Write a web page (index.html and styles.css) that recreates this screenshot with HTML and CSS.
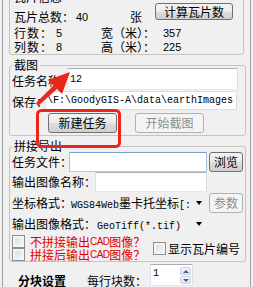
FILE: index.html
```html
<!DOCTYPE html>
<html lang="zh-CN">
<head>
  <meta charset="UTF-8">
  <title>瓦片下载</title>
  <meta name="viewport" content="width=device-width, initial-scale=1">
  <link rel="stylesheet" href="styles.css">
</head>
<body>

  <div class="panel">

    <!-- 瓦片信息 -->
    <fieldset class="group group-info">
      <legend>瓦片信息</legend>
      <div class="stat">
        <span class="lbl w62">瓦片总数：</span>
        <span class="num w54">40</span>
        <span class="lbl w25">张</span>
        <button class="btn btn-calc">计算瓦片数</button>
      </div>
      <div class="stat stat-gap">
        <span class="lbl w42 spaced">行数：</span>
        <span class="num w45">5</span>
        <span class="lbl w62">宽（米）：</span>
        <span class="num">357</span>
      </div>
      <div class="stat">
        <span class="lbl w42 spaced">列数：</span>
        <span class="num w45">8</span>
        <span class="lbl w62">高（米）：</span>
        <span class="num">225</span>
      </div>
    </fieldset>

    <!-- 截图 -->
    <fieldset class="group group-shot">
      <legend>截图</legend>
      <div class="field field-task">
        <label class="lbl lbl-task" for="taskName">任务名称：</label>
        <input id="taskName" class="text text-task" type="text" value="12">
      </div>
      <div class="field field-save">
        <span class="lbl lbl-save">保存：</span>
        <div class="path">\F:\GoodyGIS-A\data\earthImages</div>
      </div>
      <div class="actions">
        <button class="btn btn-wide">新建任务</button>
        <button class="btn btn-wide" disabled>开始截图</button>
      </div>
    </fieldset>

    <!-- 拼接导出 -->
    <fieldset class="group group-join">
      <legend>拼接导出</legend>
      <div class="field field-first">
        <span class="lbl lbl-short">任务文件：</span>
        <input class="text text-short is-hover" type="text">
        <button class="btn btn-side">浏览</button>
      </div>
      <div class="field">
        <span class="lbl lbl-long">输出图像名称：</span>
        <input class="text text-long" type="text">
      </div>
      <div class="field field-gap">
        <span class="lbl lbl-short">坐标格式：</span>
        <div class="combo text-short">
          <span class="combo-val"><span class="mono">WGS84Web</span>墨卡托坐标<span class="mono">[:</span></span>
          <i class="caret"></i>
        </div>
        <button class="btn btn-side" disabled>参数</button>
      </div>
      <div class="field field-gap">
        <span class="lbl lbl-long">输出图像格式：</span>
        <div class="combo text-long">
          <span class="combo-val"><span class="mono">GeoTiff(*.tif)</span></span>
          <i class="caret"></i>
        </div>
      </div>
      <div class="checks">
        <div class="checks-left">
          <label class="check warn"><span class="box"></span>不拼接输出<span class="cad">CAD</span>图像？</label>
          <label class="check warn"><span class="box"></span>拼接后输出<span class="cad">CAD</span>图像？</label>
        </div>
        <label class="check check-num"><span class="box"></span>显示瓦片编号</label>
      </div>
    </fieldset>

    <div class="tile-row">
      <span class="tile-title">分块设置</span>
      <span class="lbl lbl-tile">每行块数：</span>
      <div class="spin">
        <span class="spin-val">1</span>
        <span class="spin-btns">
          <span class="spin-btn"><i class="tri-up"></i></span>
          <span class="spin-btn"><i class="tri-down"></i></span>
        </span>
      </div>
    </div>

  </div>

  <!-- 标注 -->
  <svg class="marks" width="253" height="287" viewBox="0 0 253 287">
    <polygon points="36,103 38,106 57,89 54,85" fill="#e8261c"/>
    <polygon points="70,72 48,80 62,94" fill="#e8261c"/>
    <rect x="37.5" y="110.5" width="82" height="36" rx="4" fill="none" stroke="#e8261c" stroke-width="3"/>
  </svg>

</body>
</html>
```

FILE: styles.css
```css
/* reset ringan */
* { box-sizing: border-box; margin: 0; padding: 0; }

body {
  background: #f0f0f0;
  font: 12px/14px "Noto Sans CJK SC", "Noto Sans", sans-serif;
  color: #000;
  overflow: hidden;
}

.panel {
  margin: -10px 0 0 2px;
  width: 249px;
  height: 310px;
  border-left: 1px solid #a0a0a0;
  border-right: 1px solid #a0a0a0;
  padding-left: 6px;
}

/* group box */
.group {
  border: 1px solid #c4c4c4;
  border-radius: 3px;
  padding: 0 2px;
  min-width: 0;
}
.group legend {
  padding: 0 2px;
  line-height: 14px;
}
.group-info { width: 235px; padding-top: 6px; }
.group-shot { width: 237px; margin-top: 3px; padding-bottom: 2px; }
.group-join { width: 237px; margin-top: 3px; }

.lbl { white-space: nowrap; flex-shrink: 0; }
.spaced { letter-spacing: 1px; }
.num { font: 11px/14px "Liberation Sans", Arial, sans-serif; flex-shrink: 0; }
.mono { font: 10px "Liberation Mono", monospace; }

.w25 { width: 25px; }
.w42 { width: 42px; }
.w45 { width: 45px; }
.w54 { width: 54px; }
.w62 { width: 62px; }

.stat {
  display: flex;
  align-items: center;
  height: 14px;
  margin-left: 2px;
}
.stat-gap { margin-top: 2px; }

/* buttons */
.btn {
  font: inherit;
  color: #000;
  border: 1px solid #707070;
  border-radius: 3px;
  background: linear-gradient(#f2f2f2 0%, #ebebeb 50%, #dddddd 51%, #cfcfcf 100%);
  flex-shrink: 0;
}
.btn:disabled {
  color: #8d8d8d;
  border-color: #adb2b5;
  background: #f4f4f4;
}
.btn-calc {
  width: 78px;
  height: 17px;
  align-self: flex-start;
  margin-top: -7px;
}
.btn-wide { width: 69px; height: 20px; }
.btn-side { width: 34px; height: 20px; margin-left: 2px; }

/* rows with inputs */
.field {
  display: flex;
  align-items: center;
  height: 20px;
}
.field-task { height: 22px; margin-top: -4px; }
.field-save { height: 19px; margin-top: 1px; }
.field-first { margin-top: -1px; }
.field-gap { margin-top: 1px; }

.lbl-task { width: 55px; padding-top: 3px; }
.lbl-save { width: 33px; padding-top: 3px; }
.lbl-short { width: 57px; }
.lbl-long { width: 83px; }

.text {
  height: 100%;
  background: #fff;
  border: 1px solid;
  border-color: #abadb3 #dbdfe6 #e3e9ef #e2e3ea;
  padding: 0 2px;
  font: 10px "Liberation Mono", monospace;
  color: #000;
  outline: none;
}
.text-task { width: 171px; }
.text-short { width: 138px; }
.text-long { width: 112px; }
.text.is-hover { border-color: #7da2ce #a4c3e4 #b5cfe7 #a4c3e4; }

.path {
  width: 192px;
  height: 19px;
  background: #fff;
  border: 1px solid #d9dce0;
  padding-left: 1px;
  font: 10px/17px "Liberation Mono", monospace;
  white-space: nowrap;
  overflow: hidden;
}

.actions {
  display: flex;
  gap: 18px;
  margin-top: 3px;
  padding-left: 36px;
}

/* combo box */
.combo {
  display: flex;
  align-items: center;
  justify-content: space-between;
  padding: 0 5px 0 2px;
  font: 12px/14px "Noto Sans CJK SC", sans-serif;
}
.combo-val {
  white-space: nowrap;
  overflow: hidden;
  width: 122px;
}
.text-long .combo-val { width: 96px; }
.caret {
  border-top: 4px solid #000;
  border-left: 3px solid transparent;
  border-right: 3px solid transparent;
}

/* checkboxes */
.checks {
  display: flex;
  align-items: center;
  margin-top: 1px;
}
.checks-left { width: 141px; }
.check {
  display: flex;
  align-items: center;
  height: 13px;
  line-height: 13px;
  white-space: nowrap;
}
.check.warn { color: #e00000; }
.check .box {
  width: 13px;
  height: 13px;
  border: 1px solid #8e8f8f;
  background: linear-gradient(135deg, #dcdcdc, #f8f8f8);
  box-shadow: inset 0 0 0 2px #f4f4f4;
  margin-right: 5px;
}
.check-num .box { margin-right: 2px; }
.cad {
  font: 10px/13px "Liberation Sans", Arial, sans-serif;
  letter-spacing: -0.6px;
}

/* 分块设置 */
.tile-row {
  display: flex;
  align-items: flex-end;
  height: 22px;
  margin-top: 2px;
}
.tile-title {
  font-weight: bold;
  width: 69px;
  margin-left: 9px;
  margin-bottom: -2px;
}
.lbl-tile { width: 63px; margin-bottom: -2px; }

.spin {
  width: 43px;
  height: 22px;
  display: flex;
  justify-content: space-between;
  background: #fff;
  border: 1px solid;
  border-color: #abadb3 #dbdfe6 #e3e9ef #e2e3ea;
  padding: 1px 1px 1px 2px;
}
.spin-val { font: 10px/16px "Liberation Mono", monospace; }
.spin-btns {
  width: 11px;
  display: flex;
  flex-direction: column;
  gap: 1px;
  margin-top: 1px;
}
.spin-btn {
  flex: 1;
  display: flex;
  align-items: center;
  justify-content: center;
  border: 1px solid #c5d2e0;
  border-radius: 2px;
  background: linear-gradient(#f3f7fb, #dce6f1);
}
.tri-up {
  border-bottom: 3px solid #4d6185;
  border-left: 3px solid transparent;
  border-right: 3px solid transparent;
}
.tri-down {
  border-top: 3px solid #4d6185;
  border-left: 3px solid transparent;
  border-right: 3px solid transparent;
}

/* anotasi merah */
.marks {
  position: absolute;
  top: 0;
  left: 0;
  pointer-events: none;
}
```
